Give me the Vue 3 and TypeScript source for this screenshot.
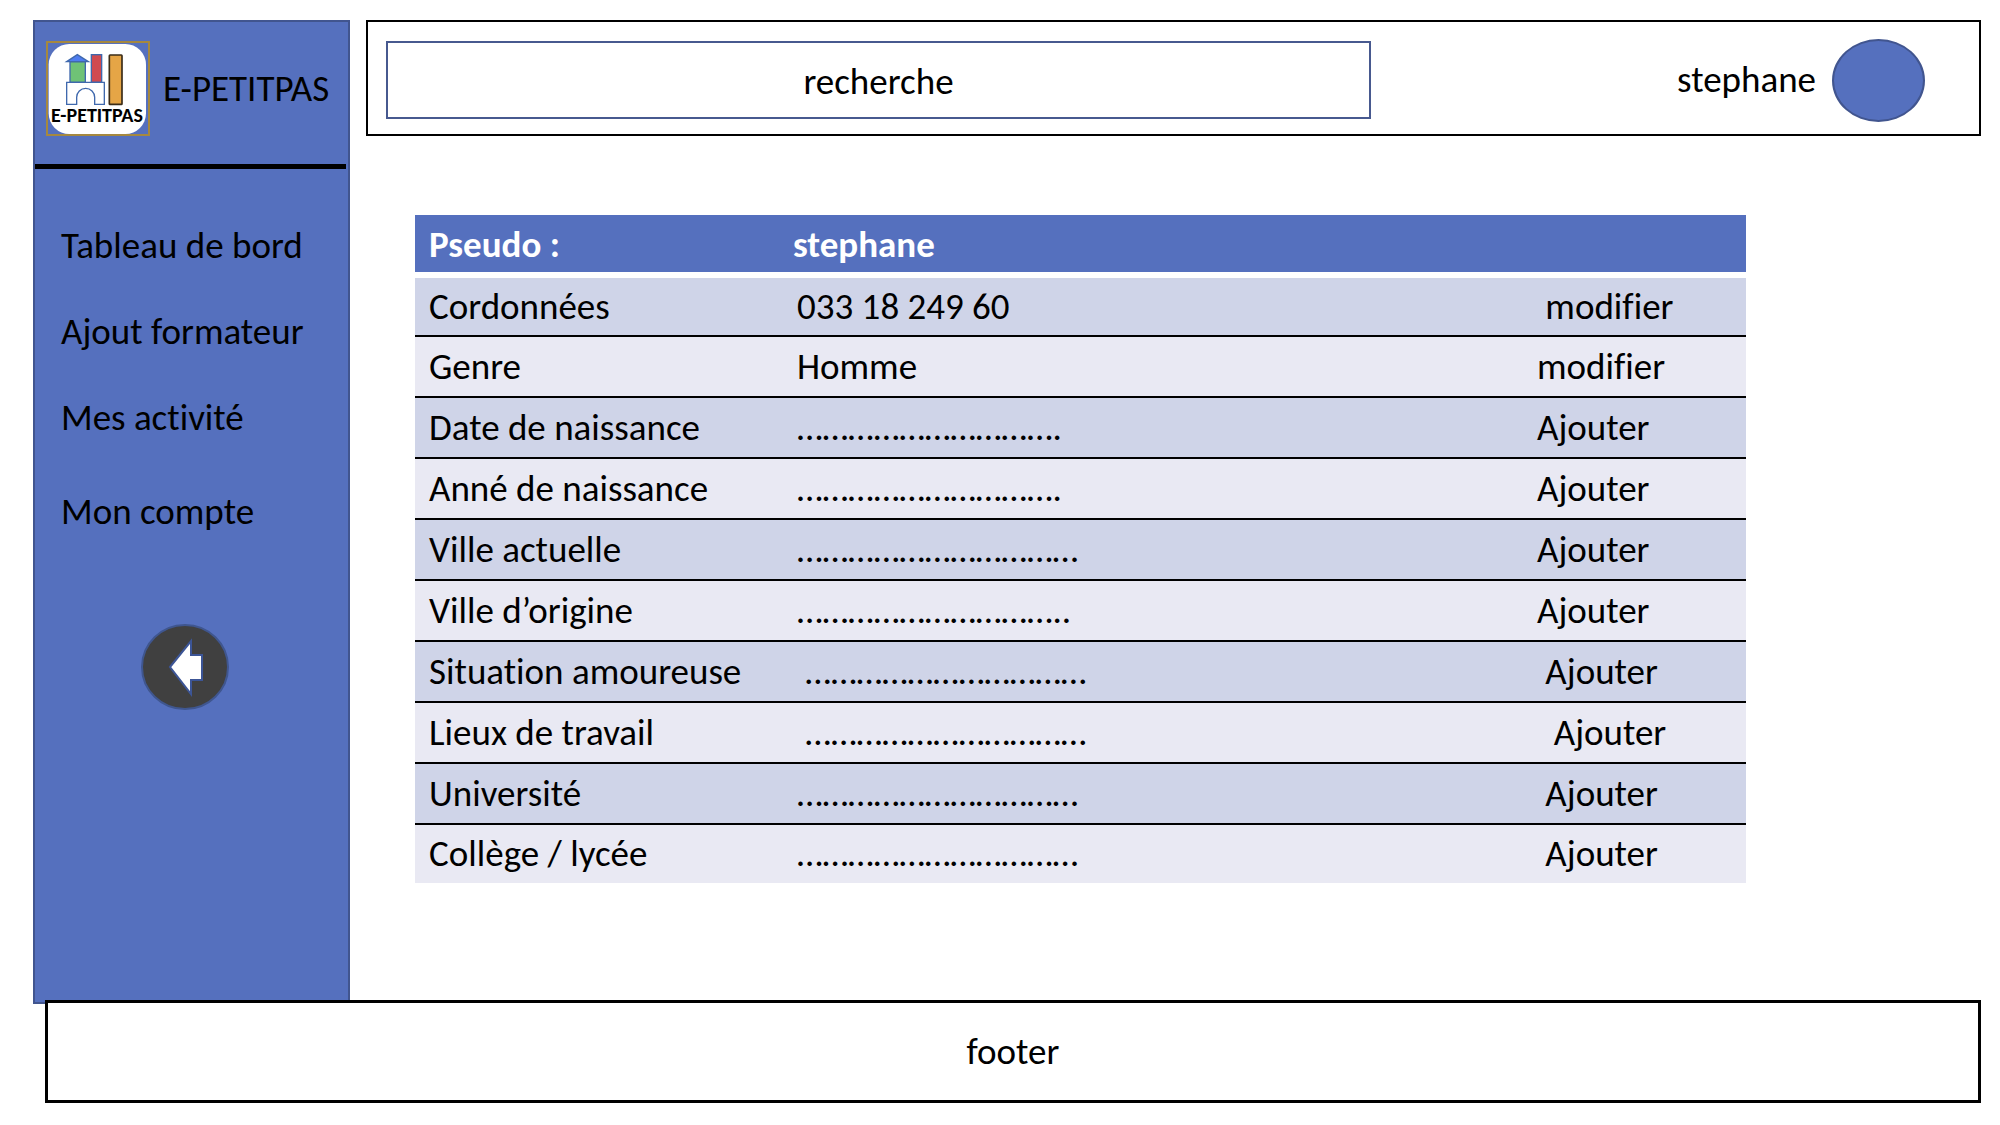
<script setup lang="ts">
import { ref } from 'vue'

interface ProfileRow {
  label: string
  value: string
  action: string
}

const menu: string[] = ['Tableau de bord', 'Ajout formateur', 'Mes activité', 'Mon compte']

const search = ref('')

const rows: ProfileRow[] = [
  { label: 'Cordonnées', value: '033 18 249 60', action: ' modifier' },
  { label: 'Genre', value: 'Homme', action: 'modifier' },
  { label: 'Date de naissance', value: '………………………….', action: 'Ajouter' },
  { label: 'Anné de naissance', value: '………………………….', action: 'Ajouter' },
  { label: 'Ville actuelle', value: '……………………………', action: 'Ajouter' },
  { label: 'Ville d’origine', value: '…………………………..', action: 'Ajouter' },
  { label: 'Situation amoureuse', value: ' ……………………………', action: ' Ajouter' },
  { label: 'Lieux de travail', value: ' ……………………………', action: '  Ajouter' },
  { label: 'Université', value: '……………………………', action: ' Ajouter' },
  { label: 'Collège / lycée', value: '……………………………', action: ' Ajouter' },
]
</script>

<template>
  <div class="page">
    <div class="upper">
      <aside class="sidebar">
        <div class="brand">
          <svg class="logo" viewBox="18 15 312 285" aria-hidden="true">
            <rect x="26" y="24" width="292" height="270" rx="62" fill="#fff" />
            <rect x="21" y="18" width="306" height="279" fill="none" stroke="#a5883f" stroke-width="6" />
            <rect x="90" y="77" width="46" height="62" fill="#6fc276" stroke="#3f68ad" stroke-width="4" />
            <path d="M80 77L112 56L145 77Z" fill="#4f7df0" stroke="#3f68ad" stroke-width="4" />
            <rect x="154" y="56" width="31" height="83" fill="#d04a50" stroke="#3f68ad" stroke-width="4" />
            <rect x="208" y="57" width="38" height="148" rx="2" fill="#e5a546" stroke="#3a2c18" stroke-width="5" />
            <path d="M80 139H193V205H164V184A27 27 0 0 0 110 184V205H80Z" fill="#fff" stroke="#3f68ad" stroke-width="4" />
            <text x="33" y="258" class="logo-text">E-PETITPAS</text>
          </svg>
          <span>E-PETITPAS</span>
        </div>
        <nav>
          <ul class="menu">
            <li v-for="item in menu" :key="item"><a href="#">{{ item }}</a></li>
          </ul>
        </nav>
        <button class="back" type="button" aria-label="Retour">
          <svg viewBox="0 0 90 88" aria-hidden="true">
            <ellipse cx="45" cy="44" rx="43" ry="42" fill="#404040" stroke="#3f568f" stroke-width="2" />
            <path d="M30 44L51 18V32H62V57H51V71Z" fill="#fff" stroke="#3c5596" stroke-width="2" />
          </svg>
        </button>
      </aside>

      <div class="content">
        <header class="topbar">
          <input v-model="search" class="search" type="text" placeholder="recherche" aria-label="recherche" />
          <div class="user">
            <span>stephane</span>
            <span class="avatar"></span>
          </div>
        </header>

        <main>
          <table class="profile">
            <colgroup>
              <col class="col-label" />
              <col />
              <col class="col-action" />
            </colgroup>
            <thead>
              <tr>
                <th scope="col">Pseudo :</th>
                <th scope="col">stephane</th>
                <th></th>
              </tr>
            </thead>
            <tbody>
              <tr v-for="row in rows" :key="row.label">
                <td>{{ row.label }}</td>
                <td class="value">{{ row.value }}</td>
                <td><button type="button">{{ row.action }}</button></td>
              </tr>
            </tbody>
          </table>
        </main>
      </div>
    </div>

    <footer class="footer">footer</footer>
  </div>
</template>

<style>
body {
  margin: 0;
  background: #fff;
}
</style>

<style scoped>
* {
  box-sizing: border-box;
}

.page {
  display: flex;
  flex-direction: column;
  min-height: 100vh;
  padding: 20px 19px 22px 33px;
  color: #000;
  font-family: Carlito, Calibri, Lato, "Noto Sans", sans-serif;
  font-size: 37px;
  font-variant-ligatures: none;
  line-height: 44px;
}

button {
  padding: 0;
  border: 0;
  background: none;
  color: inherit;
  font: inherit;
  font-variant-ligatures: none;
  cursor: pointer;
}

.upper {
  display: flex;
  flex: 1;
  gap: 16px;
}

.sidebar {
  display: flex;
  flex: 0 0 317px;
  flex-direction: column;
  border: 2px solid #41558f;
  background: #5570be;
}

.brand {
  display: flex;
  align-items: center;
  gap: 13px;
  height: 147px;
  margin-right: 2px;
  padding: 0 0 9px 11px;
  border-bottom: 5px solid #000;
  white-space: nowrap;
}

.logo {
  flex: none;
  width: 104px;
  height: 95px;
}

.logo-text {
  font-size: 60px;
  font-weight: 700;
}

.menu {
  display: flex;
  flex-direction: column;
  gap: 42px;
  margin: 0;
  padding: 55px 0 0 26px;
  list-style: none;
}

.menu li:last-child {
  padding-top: 8px;
}

.menu a {
  color: inherit;
  text-decoration: none;
}

.back {
  align-self: center;
  width: 90px;
  height: 88px;
  margin: 89px 14px 40px 0;
}

.back svg {
  display: block;
}

.content {
  flex: 1;
  min-width: 0;
}

.topbar {
  display: flex;
  align-items: center;
  justify-content: space-between;
  height: 116px;
  padding: 4px 54px 0 18px;
  border: 2px solid #000;
}

.search {
  width: 64%;
  height: 78px;
  padding: 2px 0 0;
  border: 2px solid #47598f;
  background: #fff;
  color: inherit;
  font: inherit;
  text-align: center;
}

.search::placeholder {
  color: #000;
  opacity: 1;
}

.user {
  display: flex;
  align-items: center;
  gap: 16px;
}

.avatar {
  width: 93px;
  height: 83px;
  border: 2px solid #41558f;
  border-radius: 50%;
  background: #5570be;
}

main {
  padding: 79px 235px 40px 49px;
}

.profile {
  width: 100%;
  border-spacing: 0;
  table-layout: fixed;
}

.col-label {
  width: 364px;
}

.col-action {
  width: 223px;
}

.profile th,
.profile td {
  height: 61px;
  padding: 0 0 0 14px;
  text-align: left;
  white-space: pre;
}

.profile th {
  height: 63px;
  padding-top: 2px;
  border-bottom: 6px solid #fff;
  background: #5570be;
  color: #fff;
  font-weight: 700;
}

.profile .value {
  padding-left: 18px;
}

.profile td {
  border-bottom: 2px solid #000;
  background: #e9e9f3;
}

.profile tr:nth-child(odd) td {
  background: #cfd4e8;
}

.profile tbody tr:first-child td {
  height: 59px;
}

.profile tbody tr:last-child td {
  height: 58px;
  border-bottom: 0;
}

.profile button {
  display: block;
  white-space: pre;
}

.footer {
  position: relative;
  display: flex;
  align-items: center;
  justify-content: center;
  height: 103px;
  margin: -4px 0 0 12px;
  border: 3px solid #000;
  background: #fff;
}
</style>
